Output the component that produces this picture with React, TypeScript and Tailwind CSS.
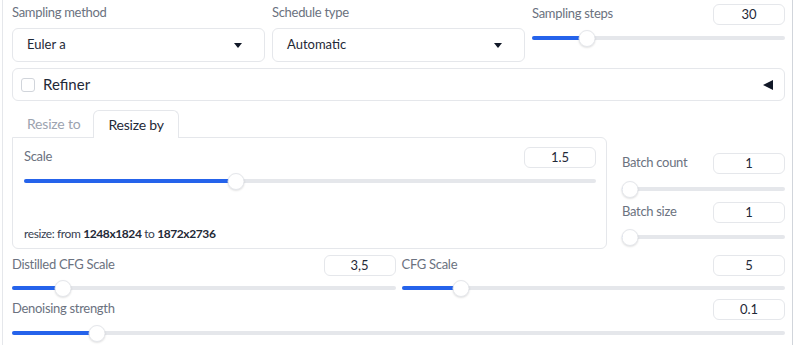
import React from "react";

const font = { fontFamily: "Lato, 'Noto Sans', sans-serif" };

type SliderProps = { pct: number };

// gradio-like range slider; thumb stays inside the track ends
const Slider = ({ pct }: SliderProps) => {
  const pos = `calc(8px + (100% - 16px) * ${pct / 100})`;
  return (
    <div className="relative h-[16px] w-full">
      <div className="absolute left-0 right-0 top-[6px] h-[4px] rounded-full bg-[#e5e7eb]" />
      <div className="absolute left-0 top-[6px] h-[4px] rounded-full bg-[#2563eb]" style={{ width: pos }} />
      <div
        className="absolute top-0 h-[17px] w-[17px] -translate-x-1/2 rounded-full border border-[#e5e7eb] bg-white shadow-[0_1px_2px_rgba(0,0,0,0.12)]"
        style={{ left: pos }}
      />
    </div>
  );
};

const NumBox = ({ value }: { value: string }) => (
  <div className="flex h-[21px] w-[72px] items-center justify-center rounded-[6px] border border-[#e5e7eb] bg-white text-[13px] text-[#1f2937]">
    {value}
  </div>
);

const Header = ({ label, value }: { label: string; value: string }) => (
  <div className="flex items-start justify-between">
    <span className="text-[13px] leading-[18px] tracking-[-0.3px] text-[#6b7280]">{label}</span>
    <NumBox value={value} />
  </div>
);

const Caret = () => (
  <svg width="8" height="5" viewBox="0 0 8 5" className="mr-[22px]">
    <path d="M0 0 L8 0 L4 5 Z" fill="#111827" />
  </svg>
);

const Dropdown = ({ label, value }: { label: string; value: string }) => (
  <div className="flex flex-col">
    <div className="h-[28px] pt-[3px] text-[13px] leading-[18px] tracking-[-0.3px] text-[#6b7280]">{label}</div>
    <div className="flex h-[34px] items-center justify-between rounded-[6px] border border-[#e5e7eb] bg-white pl-[14px]">
      <span className="text-[13px] text-[#1f2937]">{value}</span>
      <Caret />
    </div>
  </div>
);

export default function App() {
  return (
    <div className="h-[345px] w-[800px] overflow-hidden bg-white" style={font}>
      <div className="ml-[2px] h-[345px] w-[791px] border-l border-r border-r-dashed border-l-[#e5e7eb] border-r-[#d1d5db] pl-[9px] pr-[7px]">
        {/* sampler row */}
        <div className="grid grid-cols-3 gap-[7px]">
          <Dropdown label="Sampling method" value="Euler a" />
          <Dropdown label="Schedule type" value="Automatic" />
          <div className="flex flex-col">
            <div className="mt-[4px]">
              <Header label="Sampling steps" value="30" />
            </div>
            <div className="mt-[5px]">
              <Slider pct={19.8} />
            </div>
          </div>
        </div>

        {/* refiner accordion */}
        <div className="mt-[6px] flex h-[33px] items-center justify-between rounded-[6px] border border-[#e5e7eb] pl-[8px] pr-[11px]">
          <div className="flex items-center gap-[8px]">
            <div className="h-[14px] w-[14px] rounded-[3px] border border-[#d1d5db] bg-white" />
            <span className="text-[15px] text-[#1f2937]">Refiner</span>
          </div>
          <svg width="10" height="10" viewBox="0 0 10 10">
            <path d="M10 0 L10 10 L0 5 Z" fill="#111827" />
          </svg>
        </div>

        {/* resize tabs + batch */}
        <div className="mt-[9px] flex gap-[6px]">
          <div className="flex w-[595px] flex-col">
            <div className="flex h-[27px] items-end">
              <div className="flex h-[27px] items-center pl-[15px] pr-[13px] text-[14px] tracking-[-0.2px] text-[#9ca3af]">Resize to</div>
              <div className="relative z-10 -mb-[1px] flex h-[28px] items-center rounded-t-[6px] border border-b-0 border-[#e5e7eb] bg-white px-[14px] text-[14px] tracking-[-0.2px] text-[#1f2937]">
                Resize by
              </div>
            </div>
            <div className="h-[112px] rounded-b-[6px] rounded-tr-[6px] border border-[#e5e7eb] pl-[11px] pr-[10px] pt-[9px]">
              <Header label="Scale" value="1.5" />
              <div className="mt-[5px]">
                <Slider pct={36.7} />
              </div>
              <div className="mt-[36px] text-[12px] leading-[18px] tracking-[-0.4px] text-[#374151]">
                resize: from <b className="text-[#1f2937]">1248x1824</b> to <b className="text-[#1f2937]">1872x2736</b>
              </div>
            </div>
          </div>
          <div className="flex flex-1 flex-col pl-[9px] pt-[43px]">
            <Header label="Batch count" value="1" />
            <div className="mt-[7px]">
              <Slider pct={0} />
            </div>
            <div className="mt-[5px]">
              <Header label="Batch size" value="1" />
            </div>
            <div className="mt-[6px]">
              <Slider pct={0} />
            </div>
          </div>
        </div>

        {/* cfg row */}
        <div className="mt-[6px] grid grid-cols-2 gap-[6px]">
          <div className="flex flex-col">
            <Header label="Distilled CFG Scale" value="3,5" />
            <div className="mt-[4px]">
              <Slider pct={11.7} />
            </div>
          </div>
          <div className="flex flex-col">
            <Header label="CFG Scale" value="5" />
            <div className="mt-[4px]">
              <Slider pct={14.1} />
            </div>
          </div>
        </div>

        {/* denoise */}
        <div className="mt-[3px] flex flex-col">
          <Header label="Denoising strength" value="0.1" />
          <div className="mt-[5px]">
            <Slider pct={10.2} />
          </div>
        </div>
      </div>
    </div>
  );
}
